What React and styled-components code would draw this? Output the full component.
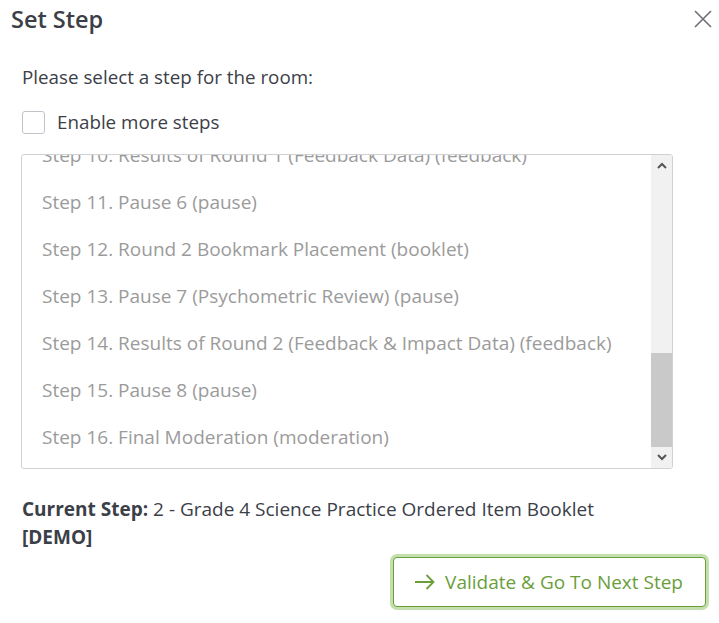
import React from "react";
import styled, { createGlobalStyle } from "styled-components";

const steps = [
  "Step 1. Welcome (intro)",
  "Step 2. Grade 4 Science Practice Ordered Item Booklet [DEMO] (booklet)",
  "Step 3. Pause 1 (pause)",
  "Step 4. Performance Level Descriptors (pld)",
  "Step 5. Pause 2 (pause)",
  "Step 6. Round 1 Bookmark Placement (booklet)",
  "Step 7. Pause 3 (pause)",
  "Step 8. Pause 4 (pause)",
  "Step 9. Pause 5 (pause)",
  "Step 10. Results of Round 1 (Feedback Data) (feedback)",
  "Step 11. Pause 6 (pause)",
  "Step 12. Round 2 Bookmark Placement (booklet)",
  "Step 13. Pause 7 (Psychometric Review) (pause)",
  "Step 14. Results of Round 2 (Feedback & Impact Data) (feedback)",
  "Step 15. Pause 8 (pause)",
  "Step 16. Final Moderation (moderation)",
];

const GlobalStyle = createGlobalStyle`
  html, body {
    margin: 0;
    padding: 0;
    background: #ffffff;
  }
  body {
    font-family: "Open Sans", "Noto Sans", sans-serif;
    color: #3b4048;
  }
`;

export default function App() {
  return (
    <>
      <GlobalStyle />
      <Modal>
        <Header>
          <Title>Set Step</Title>
          <CloseButton aria-label="Close">
            <svg width="18" height="18" viewBox="0 0 18 18">
              <path d="M1 1 L17 17 M17 1 L1 17" stroke="#6b6f75" strokeWidth="1.6" fill="none" />
            </svg>
          </CloseButton>
        </Header>
        <Body>
          <Prompt>Please select a step for the room:</Prompt>
          <CheckRow>
            <CheckBox />
            <span>Enable more steps</span>
          </CheckRow>
          <ListBox>
            <ListViewport>
              {steps.map((s) => (
                <ListItem key={s}>{s}</ListItem>
              ))}
            </ListViewport>
            <ScrollBar>
              <ScrollArrow>
                <svg width="10" height="7" viewBox="0 0 10 7">
                  <path d="M1 6 L5 2 L9 6" stroke="#555" strokeWidth="2" fill="none" />
                </svg>
              </ScrollArrow>
              <Track>
                <Thumb />
              </Track>
              <ScrollArrow>
                <svg width="10" height="7" viewBox="0 0 10 7">
                  <path d="M1 1 L5 5 L9 1" stroke="#555" strokeWidth="2" fill="none" />
                </svg>
              </ScrollArrow>
            </ScrollBar>
          </ListBox>
          <Current>
            <strong>Current Step:</strong> 2 - Grade 4 Science Practice Ordered Item Booklet{" "}
            <strong>[DEMO]</strong>
          </Current>
        </Body>
        <Footer>
          <NextButton>
            <svg width="21" height="16" viewBox="0 0 21 16">
              <path d="M1 8 H19.5 M12.5 1 L19.5 8 L12.5 15" stroke="#6a9e3b" strokeWidth="1.8" fill="none" />
            </svg>
            Validate &amp; Go To Next Step
          </NextButton>
        </Footer>
      </Modal>
    </>
  );
}

const Modal = styled.div`
  width: 719px;
  height: 623px;
  display: flex;
  flex-direction: column;
  box-sizing: border-box;
`;

const Header = styled.div`
  display: flex;
  align-items: center;
  justify-content: space-between;
  padding: 2px 7px 0 11px;
  height: 34px;
`;

const Title = styled.h2`
  margin: 0;
  font-size: 23.5px;
  font-weight: 600;
  color: #3b4048;
`;

const CloseButton = styled.button`
  border: none;
  background: none;
  padding: 0;
  width: 18px;
  height: 18px;
  cursor: pointer;
  display: flex;
`;

const Body = styled.div`
  padding: 28px 46px 0 22px;
  display: flex;
  flex-direction: column;
`;

const Prompt = styled.p`
  margin: 0;
  font-size: 18.8px;
  line-height: 26px;
`;

const CheckRow = styled.label`
  display: flex;
  align-items: center;
  gap: 12px;
  margin-top: 19px;
  font-size: 18.8px;
  line-height: 26px;
`;

const CheckBox = styled.span`
  width: 23px;
  height: 23px;
  border: 1px solid #bfc4ca;
  border-radius: 3px;
  box-sizing: border-box;
  background: #fff;
`;

const ListBox = styled.div`
  margin-top: 19px;
  margin-left: -1px;
  height: 315px;
  border: 1px solid #cfd1d4;
  border-radius: 3px;
  display: flex;
  overflow: hidden;
  box-sizing: border-box;
`;

const ListViewport = styled.div`
  flex: 1;
  display: flex;
  flex-direction: column;
  justify-content: flex-end;
  overflow: hidden;
  padding-bottom: 8px;
`;

const ListItem = styled.div`
  flex: none;
  height: 47px;
  display: flex;
  align-items: center;
  padding-left: 20px;
  font-size: 19px;
  color: #9b9b9b;
  white-space: nowrap;
`;

const ScrollBar = styled.div`
  width: 21px;
  flex: none;
  background: #f1f1f1;
  display: flex;
  flex-direction: column;
`;

const ScrollArrow = styled.div`
  height: 21px;
  display: flex;
  align-items: center;
  justify-content: center;
`;

const Track = styled.div`
  flex: 1;
  display: flex;
  flex-direction: column;
  justify-content: flex-end;
`;

const Thumb = styled.div`
  height: 94px;
  background: #c9c9c9;
`;

const Current = styled.p`
  margin: 26px 0 0;
  max-width: 600px;
  font-size: 19px;
  line-height: 28px;
  color: #3b4048;
  strong {
    font-weight: 700;
  }
`;

const Footer = styled.div`
  display: flex;
  justify-content: flex-end;
  padding: 6px 13px 0 0;
`;

const NextButton = styled.button`
  display: flex;
  align-items: center;
  gap: 10px;
  height: 50px;
  padding: 0 22px 0 20px;
  border: 1px solid #6a9e3b;
  border-radius: 4px;
  background: #fff;
  color: #6a9e3b;
  font-family: inherit;
  font-size: 19px;
  box-shadow: 0 0 0 3px #c3dfae;
  cursor: pointer;
`;
